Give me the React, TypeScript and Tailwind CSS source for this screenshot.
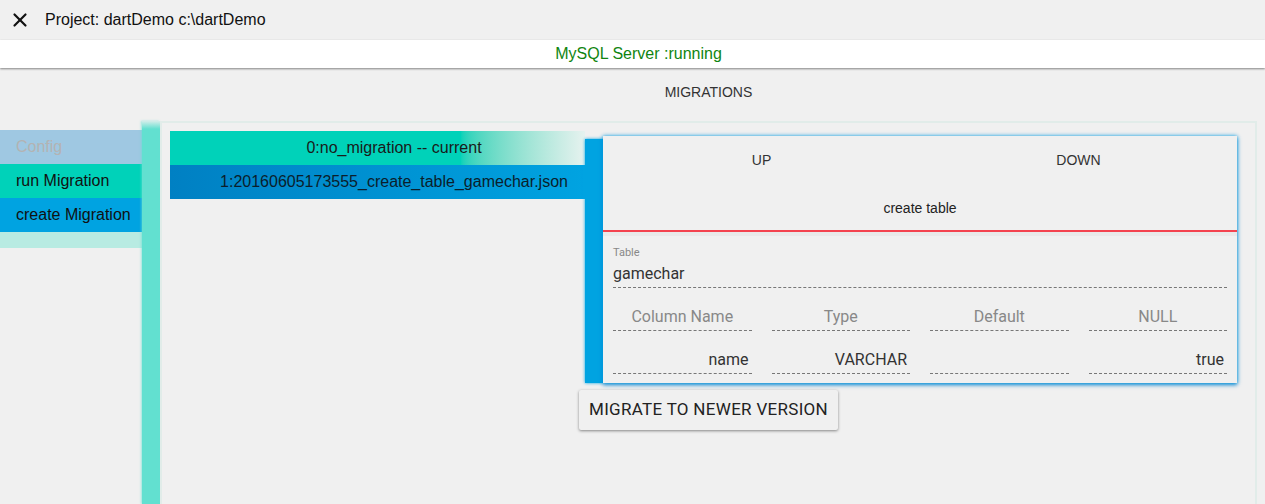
import { X } from 'lucide-react'

const menu = [
  { label: 'Config', cls: 'bg-[#9fc8e2] text-[#b3b3b3]' },
  { label: 'run Migration', cls: 'bg-[#00d2b9] text-[#111]' },
  { label: 'create Migration', cls: 'bg-[#00a3e1] text-[#111]' },
]

const columns = ['Column Name', 'Type', 'Default', 'NULL']
const row = ['name', 'VARCHAR', '', 'true']

function Dashed({ children, className }: { children?: React.ReactNode; className?: string }) {
  return (
    <div className={`h-[30px] pt-[3px] border-b border-dashed border-[#777] flex items-center ${className ?? ''}`}>
      {children}
    </div>
  )
}

export default function App() {
  return (
    <div className="w-full h-[504px] bg-[#f0f0f0] flex flex-col overflow-hidden font-['Liberation_Sans',Arial,sans-serif] text-[#111]">
      {/* Title bar */}
      <div className="h-10 flex items-center shrink-0">
        <X size={22} strokeWidth={2.4} className="ml-[9px] text-[#111]" />
        <span className="ml-[14px] text-[16px]">Project: dartDemo c:\dartDemo</span>
      </div>

      {/* Server status */}
      <div className="h-7 bg-white flex items-center justify-center pl-3 shrink-0 shadow-[0_1px_2px_rgba(0,0,0,0.45)] relative z-10">
        <span className="text-[16px] text-[#108510]">MySQL Server :running</span>
      </div>

      <div className="h-[53px] pl-[160px] pr-2 flex items-center justify-center shrink-0">
        <span className="text-[14px] text-[#333] mt-[-4px]">MIGRATIONS</span>
      </div>

      <div className="flex flex-1 min-h-0">
        {/* Side menu */}
        <div className="w-[142px] pt-[9px] shrink-0">
          {menu.map((m) => (
            <div key={m.label} className={`h-[34px] flex items-center pl-4 text-[16px] ${m.cls}`}>
              {m.label}
            </div>
          ))}
          <div className="h-4 bg-[#b8ebe2]" />
        </div>
        <div className="w-[18px] shrink-0 bg-gradient-to-b from-[#62e0d0]/20 to-[#62e0d0] to-[8px] shadow-[-1px_0_2px_rgba(98,224,208,0.6)]" />

        {/* Main panel */}
        <div className="flex-1 mr-2 border-2 border-[#e1ece9] border-b-0 pt-[8px] pl-2 pr-[18px] flex items-start">
          <div className="w-[415px] shrink-0">
            <div className="h-[34px] flex items-center justify-center pl-[33px] text-[16px] text-[#1a1a1a] bg-gradient-to-r from-[#00d2b9] from-[70%] to-[#e6f2ef]">
              0:no_migration -- current
            </div>
            <div className="h-[34px] flex items-center justify-center pl-[33px] text-[16px] text-[#0b1e2c] bg-gradient-to-r from-[#0080c3] to-[#00a3e1]">
              1:20160605173555_create_table_gamechar.json
            </div>
          </div>

          <div className="flex-1 flex flex-col ml-[-6px] mt-[5px]">
            <div className="flex pl-[6px]">
              <div className="w-[18px] mt-[3px] bg-[#00a3e1] shadow-[0_0_3px_#00a3e1]" />
              <div className="flex-1 bg-[#f0f0f0] shadow-[0_0_4px_rgba(0,160,230,0.9),0_2px_4px_rgba(0,120,200,0.8)] font-['Roboto',sans-serif]">
                <div className="h-12 flex text-[14px] text-[#333] font-['Liberation_Sans',Arial,sans-serif]">
                  <div className="flex-1 flex items-center justify-center">UP</div>
                  <div className="flex-1 flex items-center justify-center">DOWN</div>
                </div>
                <div className="h-[46px] flex items-center justify-center pt-[2px] text-[14px] text-[#222] font-['Liberation_Sans',Arial,sans-serif]">
                  create table
                </div>
                <div className="h-[2px] bg-[#f4434f]" />
                <div className="h-1 bg-[#e9e9e9]" />
                <div className="px-[10px] pb-[9px]">
                  <div className="text-[11px] text-[#888] mt-[10px] leading-[14px]">Table</div>
                  <div className="h-[28px] border-b border-dashed border-[#777] flex items-center text-[16px] text-[#333]">
                    gamechar
                  </div>
                  <div className="grid grid-cols-4 gap-x-5 mt-[13px] text-[16px] text-[#888]">
                    {columns.map((c) => (
                      <Dashed key={c} className="justify-center">
                        {c}
                      </Dashed>
                    ))}
                  </div>
                  <div className="grid grid-cols-4 gap-x-5 mt-[13px] text-[16px] text-[#333]">
                    {row.map((c, i) => (
                      <Dashed key={i} className="justify-end pr-[3px]">
                        {c}
                      </Dashed>
                    ))}
                  </div>
                </div>
              </div>
            </div>
            <div className="mt-[7px]">
              <button className="h-10 px-[10px] bg-[#f0f0f0] rounded-[2px] shadow-[0_1px_3px_rgba(0,0,0,0.45)] text-[17px] tracking-[0.3px] text-[#222] font-['Roboto',sans-serif]">
                MIGRATE TO NEWER VERSION
              </button>
            </div>
          </div>
        </div>
      </div>
    </div>
  )
}
